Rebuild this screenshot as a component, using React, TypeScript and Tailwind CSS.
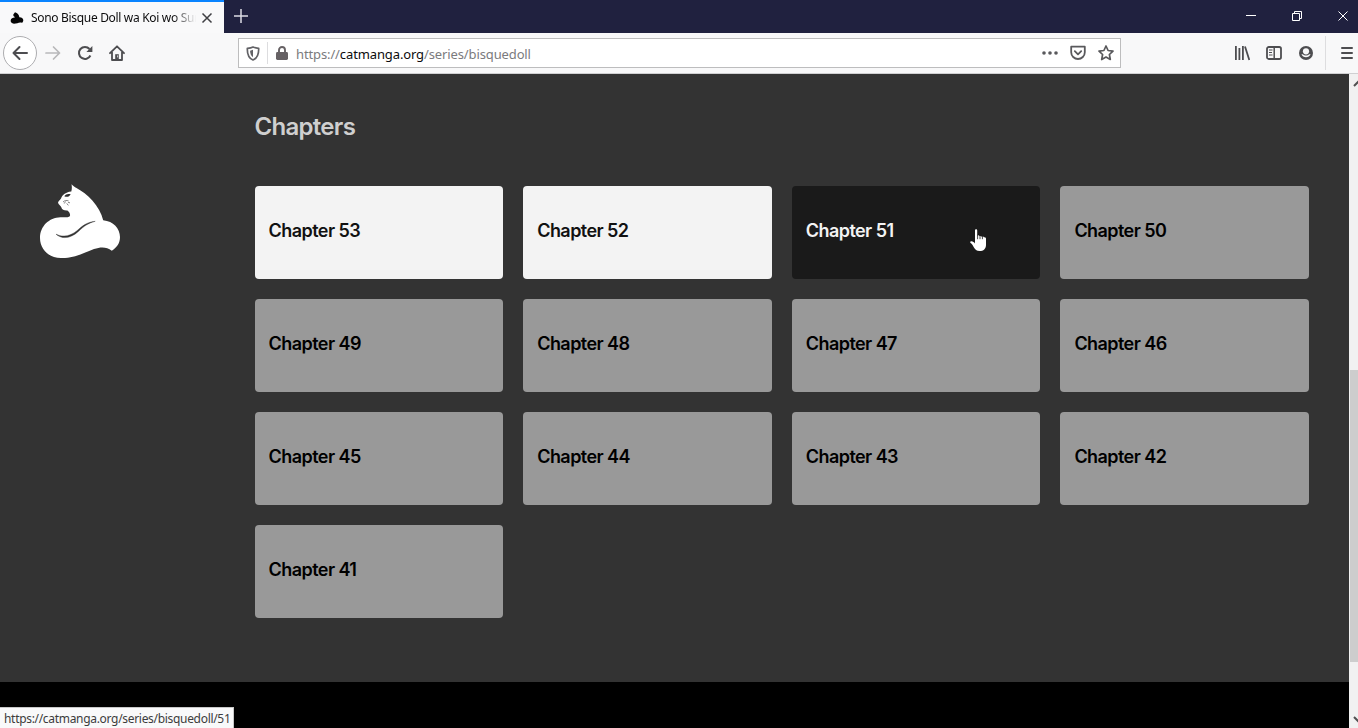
import React from "react";

type ChapterState = "unread" | "hovered" | "read";

const chapters: { number: number; state: ChapterState }[] = [
  { number: 53, state: "unread" },
  { number: 52, state: "unread" },
  { number: 51, state: "hovered" },
  ...[50, 49, 48, 47, 46, 45, 44, 43, 42, 41].map((number) => ({ number, state: "read" as ChapterState })),
];

const cardStyles: Record<ChapterState, string> = {
  unread: "bg-[#f3f3f3] text-[#111111]",
  hovered: "bg-[#1a1a1a] text-[#f3f3f3]",
  read: "bg-[#999999] text-black",
};

const uiFont = "font-['Noto_Sans','Open_Sans',sans-serif]";

function TabBar() {
  return (
    <div className="flex h-[33px] shrink-0 bg-[#20213f]">
      <div className="flex h-[33px] w-[224px] items-center border-t-2 border-[#0a84ff] bg-[#f9f9fa] pl-[10px]">
        <svg className="h-[14px] w-[14px] shrink-0" viewBox="0 0 14 14">
          <path d="M5 1.2C7.5 2 9 3.6 9.4 6.3 12 6.3 13.6 8 13.3 9.7 13 11 12.3 11.7 11.8 11.8 9.5 10.5 7 12.7 4 12.7 1.5 12.7.4 11 .7 9.3 1 7.6 2.7 6.8 4.8 6.6 5 5.5 3 5.6 3.3 4.1 3.3 2.9 4.3 2.5 5 1.2Z" fill="#050505" />
        </svg>
        <span className="ml-[7px] w-[165px] overflow-hidden whitespace-nowrap bg-linear-to-r from-[#0c0c0d] from-86% to-transparent bg-clip-text text-[12px] tracking-[-0.32px] text-transparent">
          Sono Bisque Doll wa Koi wo Suru
        </span>
        <svg className="ml-[5px] h-[12px] w-[12px]" viewBox="0 0 12 12" fill="none" stroke="#3f3f43" strokeWidth="1.5">
          <path d="M1.5 1.5l9 9M10.5 1.5l-9 9" />
        </svg>
      </div>
      <svg className="mt-[9px] ml-[10px] h-[14px] w-[14px]" viewBox="0 0 14 14" fill="none" stroke="#dcdce5" strokeWidth="1.5">
        <path d="M7 0v14M0 7h14" />
      </svg>
      <div className="ml-auto flex pr-[9px] pt-[10px]">
        <svg className="h-[12px] w-[12px]" viewBox="0 0 12 12" stroke="#ffffff">
          <path d="M1 5.5h10" />
        </svg>
        <svg className="ml-[34px] h-[12px] w-[12px]" viewBox="0 0 12 12" fill="none" stroke="#ffffff">
          <path d="M1.5 3.5h7v7h-7zM3.5 3.5v-2h7v7h-2" />
        </svg>
        <svg className="ml-[34px] h-[12px] w-[12px]" viewBox="0 0 12 12" fill="none" stroke="#ffffff">
          <path d="M1.5 1.5l9 9M10.5 1.5l-9 9" />
        </svg>
      </div>
    </div>
  );
}

function NavBar() {
  return (
    <div className="flex h-[41px] shrink-0 items-center border-b border-[#d0d0d2] bg-[#f8f8f9] pl-[3px] text-[#4d4d50]">
      <div className="flex h-[34px] w-[34px] shrink-0 items-center justify-center rounded-full border border-[#adadb0] bg-white">
        <svg className="h-4 w-4" viewBox="0 0 16 16" fill="none" stroke="currentColor" strokeWidth="2" strokeLinecap="round" strokeLinejoin="round">
          <path d="M15 8H1.5M7.5 2l-6 6 6 6" />
        </svg>
      </div>
      <svg className="ml-2 h-4 w-4" viewBox="0 0 16 16" fill="none" stroke="#b8b8ba" strokeWidth="1.7" strokeLinecap="round" strokeLinejoin="round">
        <path d="M1 8h13.5M8.5 2l6 6-6 6" />
      </svg>
      <svg className="ml-4 h-4 w-4" viewBox="0 0 16 16" fill="none" stroke="currentColor" strokeWidth="2">
        <path d="M13.4 10.5A6 6 0 1 1 12.5 4" />
        <path d="M15.4 1v6H9.4z" fill="currentColor" stroke="none" />
      </svg>
      <svg className="ml-4 h-4 w-4" viewBox="0 0 16 16" fill="none" stroke="currentColor" strokeWidth="1.8" strokeLinejoin="round" strokeLinecap="round">
        <path d="M1 8.2L8 1.3l7 6.9M3 7v8h10V7" />
        <path d="M6.2 14V9.2h3.6V14z" fill="currentColor" stroke="none" />
        <path d="M8.6 10.8v1.2" stroke="#f8f8f9" strokeWidth=".8" />
      </svg>

      <div className="ml-[113px] flex h-[30px] w-[883px] shrink-0 items-center border border-[#bdbdbe] bg-white">
        <svg className="ml-[7px] h-[15px] w-[14px]" viewBox="0 0 14 15" fill="none" stroke="#626266" strokeWidth="1.7" strokeLinejoin="round">
          <path d="M7 1C5 2 3 2.2 1.3 2.4 1.2 7.8 2.2 12 7 14c4.8-2 5.8-6.2 5.7-11.6C11 2.2 9 2 7 1Z" />
          <path d="M7 3.8v7.5C4.8 9.9 4.2 7.5 4.1 4.7Z" fill="#626266" stroke="none" />
        </svg>
        <div className="ml-[7px] h-[22px] w-px bg-[#dddddf]" />
        <svg className="ml-[8px] h-[14px] w-[12px]" viewBox="0 0 12 14">
          <path d="M3 7V4a3 3 0 0 1 6 0v3" fill="none" stroke="#666164" strokeWidth="1.9" />
          <rect y="6" width="12" height="8" rx="1.4" fill="#666164" />
        </svg>
        <span className="ml-[8px] pt-[3px] whitespace-nowrap text-[13px] tracking-[-0.12px] text-[#7b7b7d]">
          https://<span className="text-[#0c0c0d]">catmanga.org</span>/series/bisquedoll
        </span>
        <div className="ml-auto flex items-center gap-3 pr-[6px] text-[#59595c]">
          <svg className="h-4 w-4" viewBox="0 0 16 16" fill="currentColor">
            <circle cx="2" cy="8" r="1.8" />
            <circle cx="8" cy="8" r="1.8" />
            <circle cx="14" cy="8" r="1.8" />
          </svg>
          <svg className="h-4 w-4" viewBox="0 0 16 16" fill="none" stroke="currentColor" strokeWidth="1.8" strokeLinecap="round" strokeLinejoin="round">
            <path d="M1.2 1.7h13.6v5.5a6.8 6.8 0 0 1-13.6 0z" />
            <path d="M4.8 6.2L8 9.3l3.2-3.1" />
          </svg>
          <svg className="h-4 w-4" viewBox="0 0 16 16" fill="none" stroke="currentColor" strokeWidth="1.7" strokeLinejoin="round">
            <path d="M8 1l2.1 4.5 4.9.6-3.6 3.4.9 5L8 12.1l-4.3 2.4.9-5L1 6.1l4.9-.6z" />
          </svg>
        </div>
      </div>

      <svg className="ml-[113px] h-4 w-4 shrink-0" viewBox="0 0 16 16" fill="none" stroke="currentColor" strokeWidth="1.8">
        <path d="M1.9 1v14M5.4 3v12M8.9 1v14M11 1.5L15.3 15" />
      </svg>
      <svg className="ml-4 h-4 w-4 shrink-0" viewBox="0 0 16 16" fill="none" stroke="currentColor" strokeWidth="1.8">
        <rect x="1" y="2" width="14" height="12" rx="1.8" />
        <path d="M8.2 2v12" strokeWidth="1.5" />
        <path d="M3 5h3.5M3 7.5h3M3 10h3.5" strokeWidth="1" />
      </svg>
      <svg className="ml-4 h-4 w-4 shrink-0" viewBox="0 0 16 16">
        <circle cx="8" cy="8" r="7" fill="currentColor" />
        <circle cx="8" cy="6.3" r="3.1" fill="#f8f8f9" />
        <path d="M3.4 9.2a5 5 0 0 0 9.2 0h-1.3a4.6 4.6 0 0 1-6.6 0z" fill="#f8f8f9" />
      </svg>
      <div className="ml-[11px] h-[34px] w-px bg-[#dddddf]" />
      <svg className="ml-[13px] h-4 w-4 shrink-0" viewBox="0 0 16 16" stroke="currentColor" strokeWidth="2" strokeLinecap="round">
        <path d="M3 3h10M3 8h10M3 13h10" />
      </svg>
    </div>
  );
}

function CatLogo() {
  return (
    <svg className="h-[75px] w-[80px]" viewBox="0 0 80 75">
      <path
        d="M31.5.3C32.8 1.9 34.5 3 36.5 4 47 9.5 60 22 63.2 36.3c10.2.9 16.8 8.4 16.8 16.7 0 6.3-3.1 10.5-8.2 13.7-5.2-4-11-4-17.8-1.6C42 69.5 35 74.3 21 74 8.5 73.8 0 65 0 54c0-11.7 9-20.5 20.5-20.8 5 0 9.7 1 9.6-2.2-.1-2-1-3.5-2.7-4.6-3.5.1-5.5-.6-6.1-3.1-.5-1.8-2.5-2.5-3.2-4.4-.3-1.5 1.6-2.4 2.9-4.4 1.3-3.5 4-6.4 10.3-7.1.7-2.4.7-4.7.2-7.1Z"
        fill="#ffffff"
      />
      <path d="M24.3 12.2c1.5-2.2 3.5-2.6 6.4-2-1.3 2.4-3.7 3.2-6.4 2Z" fill="#303030" />
      <path d="M23 18c2-1.8 3.5-1.7 5.5-1.2M25.5 17.5l-1.2 2M28 18.2l2 .7M26.8 19.4l1.5 2" fill="none" stroke="#777777" strokeWidth=".9" />
      <path d="M16 50.2C24 54 31 51.5 37 46.7 42.5 42 46.5 38.2 55.2 37.3 48 39.3 44.2 42 38.4 47.4 31 54 22.8 56 16 50.2Z" fill="#333333" stroke="#333333" strokeWidth=".4" />
    </svg>
  );
}

function HandCursor() {
  return (
    <svg className="absolute top-[43px] left-[178px] h-[23px] w-[17px]" viewBox="0 0 17 23">
      <path
        d="M5 1.6C5 .7 5.5.3 6.1.3s1.1.5 1.1 1.3v5.1c1-.7 2-.4 2.3.4.9-.5 1.9-.1 2.3.6.9-.5 2 0 2.2.7 1-.3 2 .3 2 1.4v6.1c0 3.7-2.5 6.1-6.4 6.1-3.1 0-4.5-1.3-5.8-3.7-.9-1.7-1.8-3.3-3.2-4.2-.8-.6-.2-1.9.8-1.8 1.5 0 2.7 1 3.6 2.1Z"
        fill="#ffffff"
      />
      <path d="M7.6 5.8v4.4M10 6.3v3.9M12.4 6.8v3.4" stroke="#1a1a1a" strokeWidth=".8" />
    </svg>
  );
}

function ScrollBar() {
  return (
    <div className="flex w-[9px] shrink-0 flex-col overflow-hidden bg-[#f1f1f1] pl-px">
      <svg className="mt-[4px] h-[10px] w-[13px] shrink-0" viewBox="0 0 13 10" fill="none" stroke="#505050" strokeWidth="2">
        <path d="M4 8l4-4 4 4" />
      </svg>
      <div className="mt-[282px] h-[292px] w-2 shrink-0 bg-[#cdcdcd]" />
      <svg className="mt-[53px] h-[10px] w-[13px] shrink-0" viewBox="0 0 13 10" fill="none" stroke="#505050" strokeWidth="2">
        <path d="M4 2l4 4 4-4" />
      </svg>
    </div>
  );
}

export default function App() {
  return (
    <div className={`relative flex h-[728px] w-[1358px] flex-col overflow-hidden ${uiFont}`}>
      <TabBar />
      <NavBar />
      <div className="flex min-h-0 flex-1">
        <div className="flex flex-1 flex-col bg-black font-['Inter',sans-serif]">
          <div className="flex h-[608px] bg-[#333333]">
            <aside className="w-[254.6px] shrink-0 pt-[110px] pl-[40px]">
              <CatLogo />
            </aside>
            <main className="w-[1054.4px]">
              <h1 className="mt-[37px] h-[32px] text-[24px] leading-[32px] font-semibold tracking-[-0.72px] text-[#cfcfcf]">Chapters</h1>
              <div className="mt-[43px] grid grid-cols-4 gap-5">
                {chapters.map(({ number, state }) => (
                  <a
                    key={number}
                    className={`relative flex h-[93px] items-center rounded-[4px] pb-[5px] pl-[14px] text-[18px] font-semibold tracking-[-0.56px] ${cardStyles[state]}`}
                  >
                    Chapter {number}
                    {state === "hovered" && <HandCursor />}
                  </a>
                ))}
              </div>
            </main>
          </div>
        </div>
        <ScrollBar />
      </div>
      <div className="absolute bottom-0 left-0 flex h-[21px] w-[234px] items-center border-t border-r border-[#c8c8c8] bg-[#f9f9fa] pt-[2px] pl-1 text-[12px] tracking-[-0.31px] whitespace-nowrap text-[#3c3c3c]">
        https://catmanga.org/series/bisquedoll/51
      </div>
    </div>
  );
}
